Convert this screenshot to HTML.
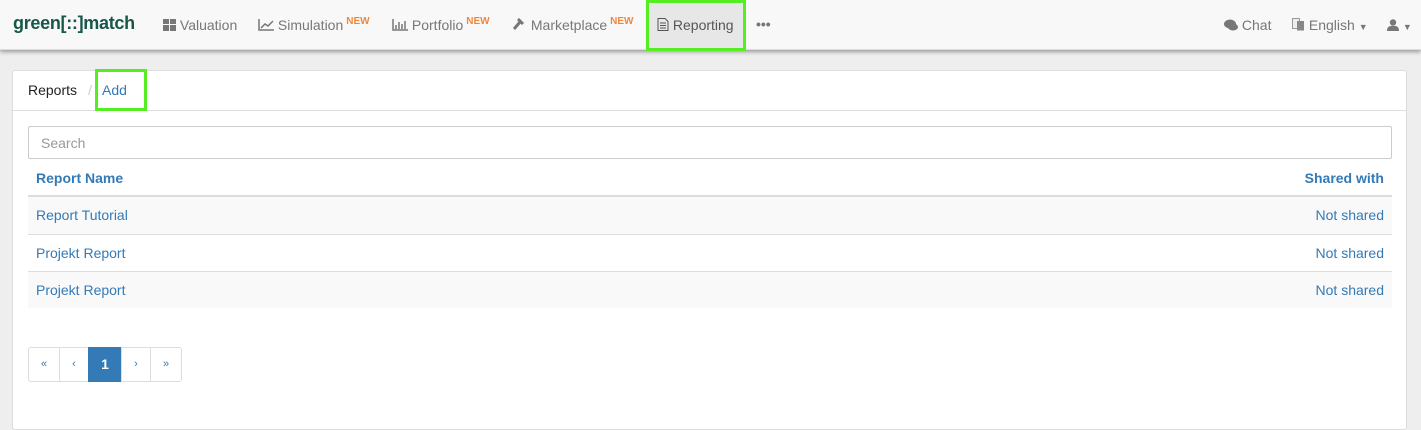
<!DOCTYPE html>
<html><head><style>
*{box-sizing:border-box;margin:0;padding:0}
body{width:1421px;height:420px;overflow:hidden;background:#eee;font-family:"Liberation Sans",sans-serif;font-size:14px;color:#333;position:relative}
.nav{position:absolute;left:0;top:0;width:1421px;height:50px;background:#f8f8f8;border-bottom:1px solid #ddd;box-shadow:0 2px 4px rgba(0,0,0,.35)}
.a{position:absolute;top:17px;color:#777;font-size:14px;white-space:nowrap}
.new{color:#f0883a;font-size:10px;font-weight:bold;position:relative;top:-6px;margin-left:3px}
.logo{position:absolute;left:13px;top:13px;font-size:18px;font-weight:bold;color:#17574a;letter-spacing:-0.3px}
.hl{position:absolute;left:646px;top:0;width:100px;height:51px;background:#e7e7e7;border:3px solid #55ee22}
.panel{position:absolute;left:12px;top:70px;width:1395px;height:360px;background:#fff;border:1px solid #ddd;border-radius:3px}
.ph{height:40px;border-bottom:1px solid #ddd}
.add{position:absolute;left:95px;top:69px;width:52px;height:42px;border:3px solid #55ee22}
.search{position:absolute;left:28px;top:126px;width:1364px;height:33px;border:1px solid #ccc;border-radius:2px;color:#999;padding:8px 12px;font-size:14px}
.row{position:absolute;left:28px;width:1364px;height:37px;border-top:1px solid #ddd;color:#337ab7}
.row span{position:absolute;top:10px}
.l{left:8px}.r{right:8px}
.pg{position:absolute;top:347px;height:35px;border:1px solid #ddd;color:#337ab7;font-size:11px;text-align:center;line-height:32px;background:#fff}
</style></head><body>
<div class="nav">
<div class="logo">green[::]match</div>
<div class="a" style="left:163px"><svg width="13" height="12" style="vertical-align:-1px"><rect x="0" y="0" width="6" height="5" fill="#777"/><rect x="7" y="0" width="6" height="5" fill="#777"/><rect x="0" y="6" width="6" height="6" fill="#777"/><rect x="7" y="6" width="6" height="6" fill="#777"/></svg> Valuation</div>
<div class="a" style="left:258px"><svg width="16" height="12" style="vertical-align:-1px"><path d="M1 0V11H16M3 9L7 5L10 7L15 2" stroke="#777" stroke-width="1.5" fill="none"/></svg> Simulation<span class="new">NEW</span></div>
<div class="a" style="left:392px"><svg width="16" height="12" style="vertical-align:-1px"><path d="M1 0V11H16M4 10V6M7 10V3M10 10V5M13 10V2" stroke="#777" stroke-width="1.5" fill="none"/></svg> Portfolio<span class="new">NEW</span></div>
<div class="a" style="left:513px"><svg width="14" height="13" style="vertical-align:-1px"><path d="M5 1L10 6M7 4L1 11" stroke="#777" stroke-width="3" fill="none"/></svg> Marketplace<span class="new">NEW</span></div>
<div class="hl"></div>
<div class="a" style="left:657px;color:#555"><svg width="12" height="13" style="vertical-align:-1px"><path d="M1 .5H8L11 3.5V12.5H1Z M3 5H9M3 7.5H9M3 10H9" stroke="#555" fill="none"/></svg> Reporting</div>
<div class="a" style="left:756px;top:16px;font-weight:bold;letter-spacing:0px">•••</div>
<div class="a" style="left:1224px"><svg width="14" height="12" style="vertical-align:-1px"><ellipse cx="6" cy="5" rx="6" ry="4.5" fill="#777"/><ellipse cx="9" cy="8" rx="5" ry="3.5" fill="#777"/></svg> Chat</div>
<div class="a" style="left:1292px"><svg width="13" height="13" style="vertical-align:-1px"><rect x="0.5" y="0.5" width="7" height="10" stroke="#999" fill="#eee"/><rect x="5" y="3" width="7" height="9.5" fill="#888"/></svg> English <span style="font-size:9px">▼</span></div>
<div class="a" style="left:1387px"><svg width="12" height="12" style="vertical-align:-1px"><circle cx="6" cy="3.5" r="3.2" fill="#777"/><path d="M0 12Q0 6 6 7Q12 6 12 12Z" fill="#777"/></svg> <span style="font-size:9px">▼</span></div>
</div>
<div class="panel"><div class="ph"></div></div>
<div style="position:absolute;left:28px;top:82px;color:#222">Reports</div>
<div style="position:absolute;left:88px;top:82px;color:#ccc">/</div>
<div style="position:absolute;left:102px;top:82px;color:#337ab7">Add</div>
<div class="add"></div>
<div class="search">Search</div>
<div class="row" style="top:160px;height:37px;border-top:none;border-bottom:2px solid #ddd;font-weight:bold"><span class="l" style="top:10px">Report Name</span><span class="r" style="top:10px">Shared with</span></div>
<div class="row" style="top:197px;background:#f9f9f9;border-top:none"><span class="l">Report Tutorial</span><span class="r">Not shared</span></div>
<div class="row" style="top:234px"><span class="l">Projekt Report</span><span class="r">Not shared</span></div>
<div class="row" style="top:271px;background:#f9f9f9;height:37px"><span class="l">Projekt Report</span><span class="r">Not shared</span></div>
<div class="pg" style="left:28px;width:32px;border-radius:3px 0 0 3px">«</div>
<div class="pg" style="left:59px;width:30px">‹</div>
<div class="pg" style="left:88px;width:34px;background:#337ab7;border-color:#337ab7;color:#fff;font-size:14px;font-weight:bold">1</div>
<div class="pg" style="left:121px;width:30px">›</div>
<div class="pg" style="left:150px;width:32px;border-radius:0 3px 3px 0">»</div>
</body></html>
